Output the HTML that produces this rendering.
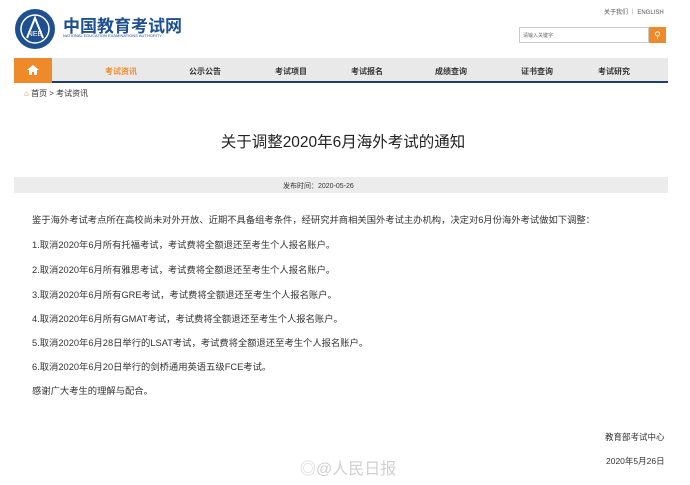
<!DOCTYPE html>
<html><head><meta charset="utf-8"><style>
*{margin:0;padding:0;box-sizing:border-box}
body{width:690px;height:485px;background:#fff;font-family:"Liberation Sans","Noto Sans CJK SC",sans-serif;color:#333;position:relative;overflow:hidden}
.a{position:absolute;white-space:nowrap}
.nav{position:absolute;left:14px;top:58px;width:654px;height:25px;background:#e9e9e9;border-bottom:2px solid #1e3d6b}
.nav span{position:absolute;top:8px;font-size:8px;font-weight:bold;color:#333}
.p{font-size:9.3px;color:#333;left:32px}
</style></head><body>
<svg class="a" style="left:14px;top:8px" width="42" height="42" viewBox="0 0 42 42"><circle cx="21" cy="21" r="20" fill="#1e4f8f"/><circle cx="21" cy="21" r="14" fill="none" stroke="#fff" stroke-width="1.5"/><path d="M13 30 L21 10 L29 30" fill="none" stroke="#fff" stroke-width="2"/><text x="21" y="28" font-size="7" fill="#fff" text-anchor="middle" font-family="Liberation Sans">NEE</text></svg>
<div class="a" style="left:63px;top:12px;font-size:17px;font-weight:bold;color:#1e4f8f">中国教育考试网</div>
<div class="a" style="left:63px;top:33px;font-size:4px;color:#1e4f8f">NATIONAL EDUCATION EXAMINATIONS AUTHORITY</div>
<div class="a" style="left:604px;top:7px;font-size:6px;color:#555">关于我们 ｜ ENGLISH</div>
<div class="a" style="left:519px;top:27px;width:130px;height:16px;border:1px solid #ccc;font-size:5px;color:#666;padding:4px 3px">请输入关键字</div>
<div class="a" style="left:649px;top:27px;width:17px;height:16px;background:#ef8a2b;color:#fff;font-size:9px;text-align:center;line-height:16px">&#9906;</div>
<div class="nav">
<div class="a" style="left:0;top:0;width:38px;height:25px;background:#ef8a2b"><svg style="position:absolute;left:13px;top:6px" width="12" height="12" viewBox="0 0 12 12"><path d="M6 1L0 6h2v5h3V8h2v3h3V6h2z" fill="#fff"/></svg></div>
<span style="left:91px;color:#ef8a2b">考试资讯</span><span style="left:175px">公示公告</span><span style="left:261px">考试项目</span><span style="left:337px">考试报名</span><span style="left:421px">成绩查询</span><span style="left:507px">证书查询</span><span style="left:584px">考试研究</span>
</div>
<div class="a" style="left:24px;top:88px;font-size:8px;color:#333"><span style="color:#ef8a2b">&#8962;</span> 首页 &gt; 考试资讯</div>
<div class="a" style="left:0;width:686px;top:130px;text-align:center;font-size:15.5px;color:#222">关于调整2020年6月海外考试的通知</div>
<div class="a" style="left:14px;top:177px;width:654px;height:16px;background:#ececec"></div>
<div class="a" style="left:283px;top:181px;font-size:7px;color:#333">发布时间：2020-05-26</div>
<div class="a p" style="top:212px">鉴于海外考试考点所在高校尚未对外开放、近期不具备组考条件，经研究并商相关国外考试主办机构，决定对6月份海外考试做如下调整：</div>
<div class="a p" style="top:237px">1.取消2020年6月所有托福考试，考试费将全额退还至考生个人报名账户。</div>
<div class="a p" style="top:262px">2.取消2020年6月所有雅思考试，考试费将全额退还至考生个人报名账户。</div>
<div class="a p" style="top:287px">3.取消2020年6月所有GRE考试，考试费将全额退还至考生个人报名账户。</div>
<div class="a p" style="top:311px">4.取消2020年6月所有GMAT考试，考试费将全额退还至考生个人报名账户。</div>
<div class="a p" style="top:335px">5.取消2020年6月28日举行的LSAT考试，考试费将全额退还至考生个人报名账户。</div>
<div class="a p" style="top:359px">6.取消2020年6月20日举行的剑桥通用英语五级FCE考试。</div>
<div class="a p" style="top:383px">感谢广大考生的理解与配合。</div>
<div class="a" style="left:605px;top:431px;font-size:8.5px">教育部考试中心</div>
<div class="a" style="left:606px;top:455px;font-size:8.5px">2020年5月26日</div>
<div class="a" style="left:300px;top:455px;font-size:16px;color:#d0d0d0">◎@人民日报</div>
</body></html>
